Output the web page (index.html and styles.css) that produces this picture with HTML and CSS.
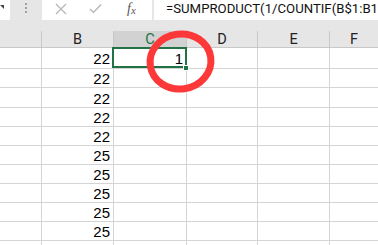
FILE: index.html
```html
<!DOCTYPE html>
<html>
<head>
<meta charset="utf-8">
<link rel="stylesheet" href="styles.css">
</head>
<body>
<div class="app">
  <div class="fbar">
    <div class="namebox"><span class="caret"></span></div>
    <div class="grip"><span class="dots"></span></div>
    <div class="fx-box">
      <svg class="ico ico-x" width="12" height="12" viewBox="0 0 12 12"><path d="M1 1 L11 11 M11 1 L1 11" stroke="#b9b9b9" stroke-width="1.4" fill="none"/></svg>
      <svg class="ico ico-check" width="13" height="11" viewBox="0 0 13 11"><path d="M1 6 L4.5 9.5 L12 1.5" stroke="#b9b9b9" stroke-width="1.5" fill="none"/></svg>
      <span class="fx">f<span class="fx-x">x</span></span>
    </div>
    <div class="formula">=SUMPRODUCT(1/COUNTIF(B$1:B1</div>
  </div>
  <div class="band"></div>
  <div class="sheet">
    <div class="hd"></div><div class="hd">B</div><div class="hd hd-sel">C</div><div class="hd">D</div><div class="hd">E</div><div class="hd hd-last">F</div>

    <div class="c r1"></div><div class="c r1 num">22</div><div class="c r1 num sel">1<span class="handle"></span></div><div class="c r1"></div><div class="c r1"></div><div class="c r1"></div>
    <div class="c"></div><div class="c num">22</div><div class="c"></div><div class="c"></div><div class="c"></div><div class="c"></div>
    <div class="c"></div><div class="c num">22</div><div class="c"></div><div class="c"></div><div class="c"></div><div class="c"></div>
    <div class="c"></div><div class="c num">22</div><div class="c"></div><div class="c"></div><div class="c"></div><div class="c"></div>
    <div class="c"></div><div class="c num">22</div><div class="c"></div><div class="c"></div><div class="c"></div><div class="c"></div>
    <div class="c"></div><div class="c num">25</div><div class="c"></div><div class="c"></div><div class="c"></div><div class="c"></div>
    <div class="c"></div><div class="c num">25</div><div class="c"></div><div class="c"></div><div class="c"></div><div class="c"></div>
    <div class="c"></div><div class="c num">25</div><div class="c"></div><div class="c"></div><div class="c"></div><div class="c"></div>
    <div class="c"></div><div class="c num">25</div><div class="c"></div><div class="c"></div><div class="c"></div><div class="c"></div>
    <div class="c"></div><div class="c num">25</div><div class="c"></div><div class="c"></div><div class="c"></div><div class="c"></div>
    <div class="c"></div><div class="c"></div><div class="c"></div><div class="c"></div><div class="c"></div><div class="c"></div>
  </div>
  <svg class="mark" width="378" height="245" viewBox="0 0 378 245">
    <ellipse cx="180.5" cy="61.5" rx="30.5" ry="27.5" fill="none" stroke="#fd3838" stroke-width="7" transform="rotate(-8 180.5 61.5)"/>
  </svg>
</div>
</body>
</html>
```
FILE: styles.css
```css
* { box-sizing: border-box; }
html, body { margin: 0; padding: 0; background: #fff; }
.app {
  position: relative;
  width: 378px;
  height: 245px;
  overflow: hidden;
  font-family: "Liberation Sans", Arial, sans-serif;
}
.fbar {
  display: flex;
  height: 20px;
  background: #e6e6e6;
}
.namebox {
  position: relative;
  width: 10px;
  background: #fff;
}
.caret {
  position: absolute;
  left: 0;
  top: 5px;
  width: 0;
  height: 0;
  border-left: 4px solid transparent;
  border-right: 0;
  border-top: 4px solid #444;
}
.grip {
  width: 32px;
  display: flex;
  justify-content: center;
  padding-top: 3px;
}
.dots {
  width: 2px;
  height: 10px;
  background: repeating-linear-gradient(#a0a0a0 0 2px, transparent 2px 4px);
}
.fx-box {
  width: 110px;
  background: #fff;
  display: flex;
  align-items: center;
  padding-left: 13px;
}
.ico-x { margin-top: -3px; }
.ico-check { margin-left: 22px; margin-top: -3px; }
.fx {
  margin-left: 25px;
  margin-top: -3px;
  font-family: "Liberation Serif", "Times New Roman", serif;
  font-style: italic;
  font-size: 14px;
  color: #555;
}
.fx-x { font-size: 11px; position: relative; top: 1px; }
.formula {
  flex: 1;
  margin-left: 2px;
  background: #fff;
  padding-left: 12px;
  font-family: Roboto, "Liberation Sans", sans-serif;
  font-size: 13.2px;
  line-height: 17px;
  color: #111;
  white-space: nowrap;
  overflow: hidden;
}
.band {
  height: 11px;
  background: #e6e6e6;
}
.sheet {
  display: grid;
  grid-template-columns: 42px 72px 73px 71px 72px 1fr;
  grid-template-rows: 17px 21px 19px 20px 19px 19px 19px 19px 19px 19px 19px 20px;
}
.hd {
  background: #e6e6e6;
  border-right: 1px solid #c8c8c8;
  border-bottom: 1px solid #c8c8c8;
  font-family: Roboto, "Liberation Sans", sans-serif;
  font-size: 14.5px;
  color: #222;
  display: flex;
  align-items: center;
  justify-content: center;
  padding-top: 1px;
}
.hd-sel { background: #d2d2d2; color: #217346; }
.hd-last { border-right: 0; }
.c {
  position: relative;
  border-right: 1px solid #d4d4d4;
  border-bottom: 1px solid #d4d4d4;
  font-size: 15px;
  color: #000;
  display: flex;
  align-items: center;
  justify-content: flex-end;
  padding-right: 3px;
  padding-top: 1px;
}
.c:nth-child(6n) { border-right: 0; }
.sel::after {
  content: "";
  position: absolute;
  left: -2px;
  top: -1px;
  right: -1px;
  bottom: 0;
  border: 2px solid #217346;
}
.handle {
  position: absolute;
  right: -3px;
  bottom: -3px;
  width: 6px;
  height: 6px;
  background: #217346;
  border: 1px solid #fff;
  z-index: 2;
}
.mark {
  position: absolute;
  left: 0;
  top: 0;
  pointer-events: none;
}
```
